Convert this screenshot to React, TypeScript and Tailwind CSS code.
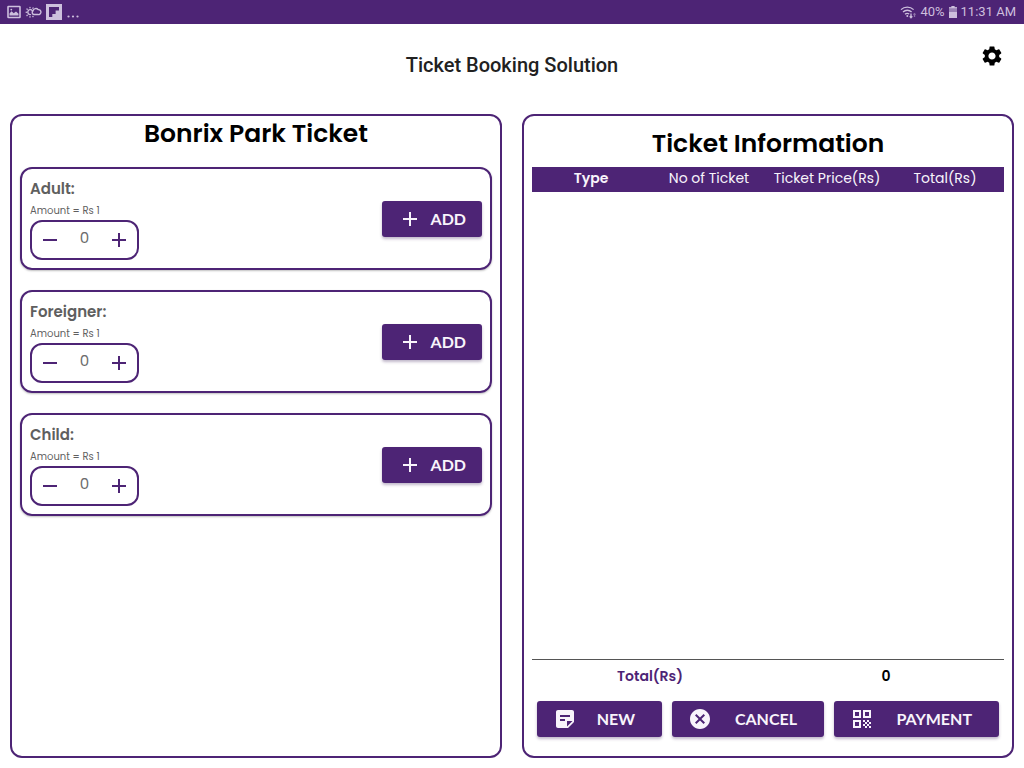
import { useState } from "react";
import { MdAdd, MdCancel, MdQrCode, MdRemove, MdSettings, MdStickyNote2 } from "react-icons/md";

type Ticket = { id: string; name: string; price: number };

const TICKETS: Ticket[] = [
  { id: "adult", name: "Adult", price: 1 },
  { id: "foreigner", name: "Foreigner", price: 1 },
  { id: "child", name: "Child", price: 1 },
];

const ACTION =
  "flex h-9 items-center rounded-[3px] bg-[#4d2475] font-['Lato',sans-serif] text-base font-bold text-[#f8f4fb] shadow-[0_2px_3px_rgba(50,20,80,0.3)]";

function StatusBar() {
  return (
    <div className="flex h-6 items-center justify-between bg-[#4d2475] pl-[7px] pr-2 font-['Roboto',sans-serif] text-[#cdbfdd]">
      <div className="flex items-center gap-1">
        <svg width="14" height="14" viewBox="0 0 14 14" fill="none" aria-hidden="true">
          <rect x="1" y="1.5" width="12" height="11" rx="0.5" stroke="currentColor" strokeWidth="1.6" />
          <path d="M2.5 10.5V8.5l2-2.2 2.2 2L9 6.500l2.500 2.300v1.700z" fill="currentColor" />
          <circle cx="4.300" cy="4.600" r="0.9" fill="currentColor" />
        </svg>
        <svg width="17" height="14" viewBox="0 0 17 14" fill="none" stroke="currentColor" strokeWidth="1.400" strokeLinecap="round" aria-hidden="true">
          <path d="M5.500 9.600A2.500 2.500 0 1 1 7.300 5.600" />
          <path d="M9 9.500a2 2 0 0 1-1-3.600 3 3 0 0 1 5.200-1.300 2.500 2.500 0 1 1-.4 4.900z" />
          <path d="M1.200 7.200h.2M2 4l.2.200M5 2.500V2.700M8 3l-.1.200M2 10.500l.2-.2M5 12v-.2M8 11.600l-.1-.2" />
        </svg>
        <svg width="16" height="16" viewBox="0 0 16 16" aria-hidden="true">
          <path d="M0 0h16v16H0z" fill="currentColor" />
          <path d="M3 3h10v3.500H9.600V10H6.300v3H3z" fill="#4d2475" />
        </svg>
        <svg width="14" height="16" viewBox="0 0 14 16" fill="currentColor" aria-hidden="true">
          <circle cx="2.500" cy="12.500" r="1.100" />
          <circle cx="7" cy="12.500" r="1.100" />
          <circle cx="11.500" cy="12.500" r="1.100" />
        </svg>
      </div>
      <div className="flex items-center gap-1 text-sm">
        <svg width="16" height="14" viewBox="0 0 16 14" fill="none" stroke="currentColor" strokeWidth="1.300" aria-hidden="true">
          <path d="M1 4.600a9 9 0 0 1 12.600 0M3 7a6.200 6.200 0 0 1 8.600 0M5 9.300a3.300 3.300 0 0 1 4.200-.2" />
          <circle cx="7.300" cy="11" r="1" fill="currentColor" stroke="none" />
          <path d="M11 8.500V12.500M9.700 11.300l1.300 1.400 1.300-1.400" />
          <path d="M14.500 12V8.800M13.500 9.700l1-1 1 1" opacity="0.5" />
        </svg>
        <span className="text-[13px]">40%</span>
        <svg width="8" height="12" viewBox="0 0 8 12" fill="currentColor" aria-hidden="true">
          <path d="M2.500 0h3v1.300H8V12H0V1.300h2.500z" opacity="0.6" />
          <path d="M0 6h8v6H0zM2.500 0h3v1.300H8V2.300H0v-1h2.500z" />
        </svg>
        <span className="text-[13px]">11:31 AM</span>
      </div>
    </div>
  );
}

function TicketCard({ ticket, onAdd }: { ticket: Ticket; onAdd: (count: number) => void }) {
  const [count, setCount] = useState(0);
  return (
    <li className="flex items-center justify-between rounded-[12px] border-2 border-[#4d2475] p-2 shadow-[0_1px_2px_rgba(0,0,0,0.25)]">
      <div>
        <h3 className="text-[15px] leading-6 font-semibold text-[#5f5f5f]">{ticket.name}:</h3>
        <p className="text-[10px] leading-[19px] text-[#5f5f5f]">Amount = Rs {ticket.price}</p>
        <div className="flex h-10 w-fit items-center rounded-[12px] border-2 border-[#4d2475] px-1.5 text-[#4d2475]">
          <button type="button" aria-label={`Fewer ${ticket.name} tickets`} onClick={() => setCount(Math.max(0, count - 1))}>
            <MdRemove size={24} />
          </button>
          <output className="w-[45px] pb-1 text-center text-[15px] leading-6 text-[#6b6b6b]">{count}</output>
          <button type="button" aria-label={`More ${ticket.name} tickets`} onClick={() => setCount(count + 1)}>
            <MdAdd size={24} />
          </button>
        </div>
      </div>
      <button type="button" className={`${ACTION} w-[100px] justify-between px-4`} onClick={() => onAdd(count)}>
        <MdAdd size={24} />
        ADD
      </button>
    </li>
  );
}

export default function App() {
  const [cart, setCart] = useState<Record<string, number>>({});
  const rows = TICKETS.filter((t) => cart[t.id] > 0);
  const total = rows.reduce((sum, t) => sum + cart[t.id] * t.price, 0);

  return (
    <div className="flex min-h-screen flex-col bg-white font-['Poppins','Inter',sans-serif] text-black">
      <StatusBar />
      <header className="grid h-[90px] grid-cols-[1fr_auto_1fr] items-start px-5 pt-5">
        <h1 className="col-start-2 pt-2 font-['Roboto',sans-serif] text-xl leading-[26px] font-medium text-[#212121]">
          Ticket Booking Solution
        </h1>
        <button type="button" aria-label="Settings" className="justify-self-end">
          <MdSettings size={24} />
        </button>
      </header>
      <main className="grid flex-1 grid-cols-2 gap-5 px-2.5 pb-2.5">
        <section className="rounded-[12px] border-2 border-[#4d2475] px-2">
          <h2 className="mb-[15px] text-center text-[25px] leading-9 font-semibold">Bonrix Park Ticket</h2>
          <ul className="flex flex-col gap-5">
            {TICKETS.map((t) => (
              <TicketCard key={t.id} ticket={t} onAdd={(n) => setCart({ ...cart, [t.id]: (cart[t.id] ?? 0) + n })} />
            ))}
          </ul>
        </section>
        <section className="flex flex-col rounded-[12px] border-2 border-[#4d2475] px-2 pt-2.5 pb-[19px]">
          <h2 className="mb-[5px] text-center text-[25px] leading-9 font-semibold">Ticket Information</h2>
          <div className="flex-1">
            <table className="w-full table-fixed text-center text-sm">
              <thead className="bg-[#4d2475] leading-[23px] text-[#f8f4fb]">
                <tr>
                  <th className="px-0 pt-0 pb-0.5 font-semibold">Type</th>
                  <th className="px-0 pt-0 pb-0.5 font-normal">No of Ticket</th>
                  <th className="px-0 pt-0 pb-0.5 font-normal">Ticket Price(Rs)</th>
                  <th className="px-0 pt-0 pb-0.5 font-normal">Total(Rs)</th>
                </tr>
              </thead>
              <tbody>
                {rows.map((t) => (
                  <tr key={t.id} className="h-8">
                    <td>{t.name}</td>
                    <td>{cart[t.id]}</td>
                    <td>{t.price}</td>
                    <td>{cart[t.id] * t.price}</td>
                  </tr>
                ))}
              </tbody>
            </table>
          </div>
          <div className="grid grid-cols-2 border-t border-[#555555] pt-1.5 pb-[15px] text-center text-sm font-semibold">
            <span className="text-[#4d2475]">Total(Rs)</span>
            <span>{total}</span>
          </div>
          <div className="grid grid-cols-[125fr_152fr_165fr] gap-2.5 px-[5px]">
            <button type="button" className={`${ACTION} justify-between pr-[27px] pl-4`} onClick={() => setCart({})}>
              <MdStickyNote2 size={24} />
              NEW
            </button>
            <button type="button" className={`${ACTION} justify-between pr-[27px] pl-4`} onClick={() => setCart({})}>
              <MdCancel size={24} />
              CANCEL
            </button>
            <button type="button" className={`${ACTION} justify-between pr-[27px] pl-4`}>
              <MdQrCode size={24} />
              PAYMENT
            </button>
          </div>
        </section>
      </main>
    </div>
  );
}
